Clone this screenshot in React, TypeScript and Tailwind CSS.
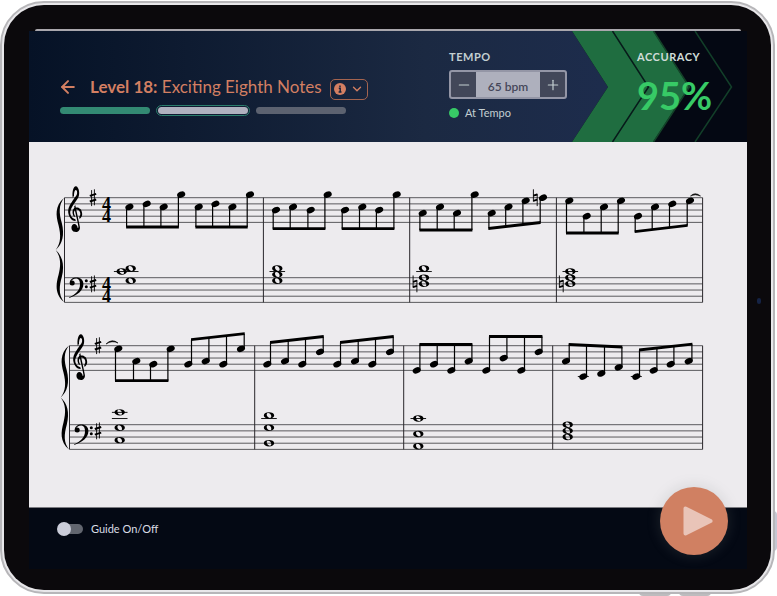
import { ArrowLeft, ChevronDown, Minus, Plus } from "lucide-react";
import { GiGClef } from "react-icons/gi";

const GAP = 6.17;
const STEP = GAP / 2;

// Each note is [x, step]; steps count downward from the top staff line.
type Note = [number, number];

interface Beam {
  up?: boolean;
  from: number;
  to: number;
  notes: Note[];
}

interface Chord {
  x: number;
  steps: number[];
  ledgers?: number[];
  aside?: Note;
  natural?: number;
}

interface SystemData {
  x: number;
  y: number;
  bass: number;
  bars: number[];
  beams: Beam[];
  chords: Chord[];
  time: boolean;
}

const RIGHT = 673.6;

const systems: SystemData[] = [
  {
    x: 35.5,
    y: 55.7,
    bass: 80,
    time: true,
    bars: [234.4, 380.7, 527.4],
    beams: [
      { from: 29.3, to: 29.3, notes: [[100.4, 3], [117.7, 2], [134.7, 3], [152.2, -1]] },
      { from: 29.3, to: 29.3, notes: [[169.7, 3], [186.4, 2], [203.4, 3], [221, -1]] },
      { from: 31, to: 31, notes: [[247, 4], [264, 3], [281.7, 4], [298.7, -1]] },
      { from: 31, to: 31, notes: [[316, 4], [333.3, 3], [350.2, 4], [367.7, -1]] },
      { from: 32.3, to: 32.3, notes: [[393.7, 5], [411, 3], [428, 5], [445.7, -1]] },
      { from: 30.8, to: 24.8, notes: [[462.7, 5], [479.5, 3], [496.7, 1], [514, 0]] },
      { from: 35.3, to: 35.3, notes: [[540.3, 1], [557.7, 6], [575, 3], [592, 1]] },
      { from: 34, to: 27.7, notes: [[609, 6], [626, 3], [643.3, 2], [661, 1]] },
    ],
    chords: [
      { x: 101.7, steps: [-3, 1], aside: [92.7, -2], ledgers: [-2] },
      { x: 248.3, steps: [-3, -1, 1], ledgers: [-2] },
      { x: 395, steps: [-3, 0, 2], ledgers: [-2], natural: 2 },
      { x: 541.3, steps: [-2, 0, 2], ledgers: [-2], natural: 2 },
    ],
  },
  {
    x: 40.5,
    y: 203.7,
    bass: 79,
    time: false,
    bars: [225.7, 374.7, 523.7],
    beams: [
      { from: 35, to: 35, notes: [[89.3, 1], [107.3, 5], [124.3, 6], [141.7, 1]] },
      { up: true, from: -6, to: -12, notes: [[159.3, 6], [176.7, 5], [194.3, 6], [212, 1]] },
      { up: true, from: -3.2, to: -9.2, notes: [[238.3, 6], [256, 5], [273.3, 6], [291, 2]] },
      { up: true, from: -3.2, to: -9.2, notes: [[308.3, 6], [326, 5], [343.3, 6], [361, 2]] },
      { up: true, from: -1.2, to: -1.2, notes: [[387.7, 8], [405, 6], [422.3, 8], [439.7, 5]] },
      { up: true, from: -9.2, to: -9.2, notes: [[457.3, 8], [474.7, 4], [492.3, 8], [509.7, 2]] },
      { up: true, from: -1.2, to: 1.3, notes: [[537, 5], [554.3, 10], [572.3, 9], [589.7, 7]] },
      { up: true, from: 4.3, to: -1.5, notes: [[607.3, 10], [624.7, 8], [641.7, 6], [659.7, 5]] },
    ],
    chords: [
      { x: 90.7, steps: [-4, 1, 5], ledgers: [-4, -2] },
      { x: 240, steps: [-3, 1, 6], ledgers: [-2] },
      { x: 389.3, steps: [-2, 3, 7], ledgers: [-2] },
      { x: 538.7, steps: [0, 2, 4] },
    ],
  },
];

function Staff({ x, y }: { x: number; y: number }) {
  return (
    <g stroke="#4b494d" strokeWidth="0.9">
      {[0, 1, 2, 3, 4].map((n) => (
        <line key={n} x1={x} x2={RIGHT} y1={y + n * GAP} y2={y + n * GAP} />
      ))}
    </g>
  );
}

function Sharp({ x, y }: { x: number; y: number }) {
  return (
    <g transform={`translate(${x} ${y})`} stroke="#000">
      <path d="M-1.4-7.6V8.4M1.4-8.4V7.6" strokeWidth="0.9" />
      <path d="M-3.2-1.8 3.2-3.8M-3.2 3.8 3.2 1.8" strokeWidth="2" />
    </g>
  );
}

function Natural({ x, y }: { x: number; y: number }) {
  return (
    <g transform={`translate(${x} ${y})`} stroke="#000" fill="none">
      <path d="M-1.9-8.4V3.9M1.9-3.9V8.4" strokeWidth="0.9" />
      <path d="M-2-2 2-3.2M-2 3.2 2 2" strokeWidth="1.9" />
    </g>
  );
}

function WholeNote({ x, y }: { x: number; y: number }) {
  return (
    <g transform={`translate(${x} ${y})`}>
      <path
        fillRule="evenodd"
        d="M-5.2 0C-5.2-2-2.8-3.2 0-3.2S5.2-2 5.2 0 2.8 3.2 0 3.2-5.2 2-5.2 0ZM-2.3-.9C-2.3.9-.7 2.5 .8 2.5 1.8 2.5 2.3 1.8 2.3.9 2.3-.9.7-2.5-.8-2.5-1.8-2.5-2.3-1.8-2.3-.9Z"
      />
    </g>
  );
}

function BassClef({ x, y }: { x: number; y: number }) {
  return (
    <g transform={`translate(${x} ${y})`}>
      <circle cx="3.2" cy="5.2" r="2.5" />
      <path d="M.8 5C.8 1.8 3.6-.2 7.4-.2 11.6-.2 14.4 2.2 14.4 6.4 14.4 13 8.4 17.6.2 20.4L0 19.8C6.6 16.8 11 12.6 11 6.6 11 3 9.8.7 7 .7 4.5.7 2.6 2 2 4.4Z" />
      <circle cx="17.3" cy="3" r="1.5" />
      <circle cx="17.3" cy="9" r="1.5" />
    </g>
  );
}

function TimeSignature({ x, y }: { x: number; y: number }) {
  return (
    <text className="font-['Liberation_Serif',serif] text-[18px] font-bold" textAnchor="middle">
      <tspan x={x} y={y + 12.2}>4</tspan>
      <tspan x={x} y={y + 24.6}>4</tspan>
    </text>
  );
}

function BeamGroup({ beam }: { beam: Beam }) {
  const side = beam.up ? 3.2 : -2.8;
  const first = beam.notes[0][0] + side;
  const last = beam.notes[beam.notes.length - 1][0] + side;
  const beamAt = (x: number) => beam.from + ((beam.to - beam.from) * (x - first)) / (last - first);
  return (
    <g>
      {beam.notes.map(([x, step]) => (
        <g key={x}>
          <ellipse rx="4.2" ry="3" transform={`translate(${x} ${step * STEP}) rotate(-24)`} />
          <line x1={x + side} x2={x + side} y1={step * STEP} y2={beamAt(x + side)} stroke="#000" strokeWidth="1.2" />
          {step === 10 && <line x1={x - 5.5} x2={x + 5.5} y1={step * STEP} y2={step * STEP} stroke="#000" strokeWidth="0.9" />}
        </g>
      ))}
      <path
        d={`M${first - 0.5} ${beam.from - 1.4}L${last + 0.5} ${beam.to - 1.4}V${beam.to + 1.4}L${first - 0.5} ${beam.from + 1.4}Z`}
      />
    </g>
  );
}

function ChordStack({ chord }: { chord: Chord }) {
  const left = chord.aside ? chord.aside[0] : chord.x;
  return (
    <g>
      {chord.ledgers?.map((step) => (
        <line key={step} x1={left - 7.8} x2={chord.x + 7.8} y1={step * STEP} y2={step * STEP} stroke="#000" strokeWidth="0.9" />
      ))}
      {chord.aside && <WholeNote x={chord.aside[0]} y={chord.aside[1] * STEP} />}
      {chord.steps.map((step) => (
        <WholeNote key={step} x={chord.x} y={step * STEP} />
      ))}
      {chord.natural !== undefined && <Natural x={chord.x - 9} y={chord.natural * STEP} />}
    </g>
  );
}

const BRACE_HALF = "M-.5-52C-10-44-8.5-34-6-25C-3.500-15-3.500-7-8.800 0C-2-6 .2-15-2.700-27C-5.500-37-6-45-.5-52Z";

function System({ data }: { data: SystemData }) {
  const { x, bass } = data;
  const bottom = bass + 4 * GAP;
  const mid = bottom / 2;
  return (
    <g transform={`translate(0 ${data.y})`}>
      <Staff x={x} y={0} />
      <Staff x={x} y={bass} />
      <g stroke="#29272b" strokeWidth="1">
        {[x, ...data.bars, RIGHT].map((bar) => (
          <line key={bar} x1={bar} x2={bar} y1="0" y2={bottom} />
        ))}
      </g>
      <path d={BRACE_HALF} transform={`translate(${x} ${mid})`} />
      <path d={BRACE_HALF} transform={`translate(${x} ${mid}) scale(1 -1)`} />
      <g transform={`translate(${x - 11.5} -13.5) scale(0.84 1.04) skewX(5)`}>
        <GiGClef size={48} />
      </g>
      <BassClef x={x + 4.5} y={bass} />
      <Sharp x={x + 28.5} y={0} />
      <Sharp x={x + 28.5} y={bass + GAP} />
      {data.time && <TimeSignature x={x + 42} y={0} />}
      {data.time && <TimeSignature x={x + 42} y={bass} />}
      {data.beams.map((beam) => (
        <BeamGroup key={beam.notes[0][0]} beam={beam} />
      ))}
      <g transform={`translate(0 ${bass})`}>
        {data.chords.map((chord) => (
          <ChordStack key={chord.x} chord={chord} />
        ))}
      </g>
    </g>
  );
}

function Score() {
  return (
    <svg viewBox="0 0 718 365" className="block w-full" role="img" aria-label="Sheet music">
      {systems.map((data) => (
        <System key={data.y} data={data} />
      ))}
      <Natural x={506.3} y={55.7} />
      <path d="M661.5 54Q666 49.5 671.5 54Q666 51.5 661.5 54Z" stroke="#000" strokeWidth="0.6" />
      <path d="M77 202Q83 196 89 201Q83 198 77 202Z" stroke="#000" strokeWidth="0.6" />
    </svg>
  );
}

function Chevrons() {
  return (
    <svg viewBox="0 0 175 111" preserveAspectRatio="none" className="absolute inset-y-0 right-0 h-full w-[175px]" aria-hidden="true">
      <path d="M0 0H175V111H0L36 56Z" fill="#040813" />
      <path d="M0 0H81L117 56 81 111H0L36 56Z" fill="#1f6d40" />
      <path d="M40.5 0 76.5 56 40.5 111" fill="none" stroke="#071a1a" strokeWidth="1.5" />
      <path d="M81.5 0 117.5 56 81.5 111" fill="none" stroke="#144329" strokeWidth="1.5" />
      <path d="M123 0 159.5 56 123 111" fill="none" stroke="#123f29" strokeWidth="1.5" />
    </svg>
  );
}

function Header() {
  return (
    <header className="relative grid grid-cols-[389fr_188fr_78fr] bg-linear-to-r from-[#061226] via-[#1b2942] via-55% to-[#1d2c4c] to-80% pr-8 pl-[31px] pb-[23px]">
      <Chevrons />
      <div className="relative pt-11">
        <div className="flex h-6 items-center text-[#d37f62]">
          <button type="button" aria-label="Back" className="-ml-0.5">
            <ArrowLeft size={20} strokeWidth={2.4} />
          </button>
          <h1 className="ml-3 text-[17px] leading-5 whitespace-nowrap">
            <b>Level 18:</b> Exciting Eighth Notes
          </h1>
          <button type="button" aria-label="Level information" className="mt-1 ml-2 flex h-[21px] w-[38px] items-center justify-center gap-1 rounded-[5px] border border-[#a4644f]">
            <svg viewBox="0 0 12 12" className="size-3" aria-hidden="true">
              <circle cx="6" cy="6" r="6" fill="#d37f62" />
              <path d="M6 2.4v1.5M4.8 5.2H6.2V9M4.6 9H7.5" stroke="#14203a" strokeWidth="1.4" fill="none" />
            </svg>
            <ChevronDown size={14} strokeWidth={2.4} />
          </button>
        </div>
        <div className="mt-2 flex items-center gap-2">
          <span className="h-[7px] w-[90px] rounded-full bg-[#338a73]" />
          <span className="h-[7px] w-[90px] rounded-full bg-[#b0b1bf] outline-1 outline-offset-1 outline-[#2a7d6c]" />
          <span className="h-[7px] w-[90px] rounded-full bg-[#5c6270]" />
        </div>
      </div>
      <div className="relative pt-5 text-[#c3cfd1]">
        <label htmlFor="tempo" className="block text-[11px] leading-3 font-bold tracking-wider">TEMPO</label>
        <div className="mt-[7px] flex h-[29px] w-[118px] overflow-hidden rounded-[3px] border-2 border-[#9496a6] bg-[#aeb0bd]">
          <button type="button" aria-label="Slower" className="flex w-[25px] items-center justify-center bg-[#424759]">
            <Minus size={16} strokeWidth={1.8} />
          </button>
          <input id="tempo" type="text" defaultValue="65 bpm" className="w-16 min-w-0 flex-1 pt-1 text-center text-[12px] font-semibold text-[#45475a] outline-none" />
          <button type="button" aria-label="Faster" className="flex w-[25px] items-center justify-center bg-[#424759]">
            <Plus size={16} strokeWidth={1.8} />
          </button>
        </div>
        <p className="mt-2 flex items-center gap-1.5 text-[11px] leading-3">
          <span className="size-2.5 rounded-full bg-[#37ca66]" />
          At Tempo
        </p>
      </div>
      <div className="relative pt-5">
        <h2 className="text-[11px] leading-3 font-bold tracking-wider text-[#d0dcd8]">ACCURACY</h2>
        <p className="mt-3 text-[38px] leading-10 font-bold text-[#37ca66]">95%</p>
      </div>
    </header>
  );
}

function Footer() {
  return (
    <footer className="relative flex h-[62px] items-start border-t border-[#7b7b80] bg-[#040914] px-7 pt-[13px]">
      <label className="flex items-center gap-2 text-[11px] leading-4 text-[#dadde6]">
        <input type="checkbox" className="peer sr-only" />
        <span className="flex h-3.5 w-[26px] items-center" aria-hidden="true">
          <span className="z-10 size-3.5 shrink-0 rounded-full bg-[#cbcdd9]" />
          <span className="-ml-2 h-2.5 w-5 rounded-full bg-[#62666f]" />
        </span>
        Guide On/Off
      </label>
      <button type="button" aria-label="Play" className="absolute -top-[21px] right-[19px] flex size-[68px] items-center justify-center rounded-full bg-[#d08062] shadow-[0_0_12px_3px_rgba(120,130,130,0.15)]">
        <svg viewBox="0 0 30 30" className="ml-2 size-[30px]" aria-hidden="true">
          <path d="M2.5 2.5V27.5L27.5 15Z" fill="#e9c4b8" stroke="#e9c4b8" strokeWidth="4" strokeLinejoin="round" />
        </svg>
      </button>
    </footer>
  );
}

export default function App() {
  return (
    <div className="min-h-screen bg-white pt-px pr-0.5 font-[Lato,sans-serif]">
      <div className="relative">
        <span className="absolute top-[510px] -right-0.5 h-10 w-1 rounded-r-sm bg-[#c6c7d3]" />
        <span className="absolute right-[104px] -bottom-0.5 h-1 w-8 rounded-b-sm bg-[#bdbcbe]" />
        <span className="absolute right-16 -bottom-0.5 h-1 w-8 rounded-b-sm bg-[#bdbcbe]" />
        <div className="relative rounded-[44px] border-2 border-[#b7b6b9] bg-[#e8e7ea] p-0.5">
          <div className="rounded-[40px] bg-[#0b090c] pt-6 pr-6 pb-[21px] pl-[25px]">
            <div className="mx-1.5 h-0.5 rounded-t-full bg-[#a9a7ad]" />
            <main className="bg-[#edebee]">
              <Header />
              <Score />
              <Footer />
            </main>
          </div>
          <span className="absolute top-1/2 right-3 h-1.5 w-1 rounded-full bg-[#152345]" />
        </div>
      </div>
    </div>
  );
}
